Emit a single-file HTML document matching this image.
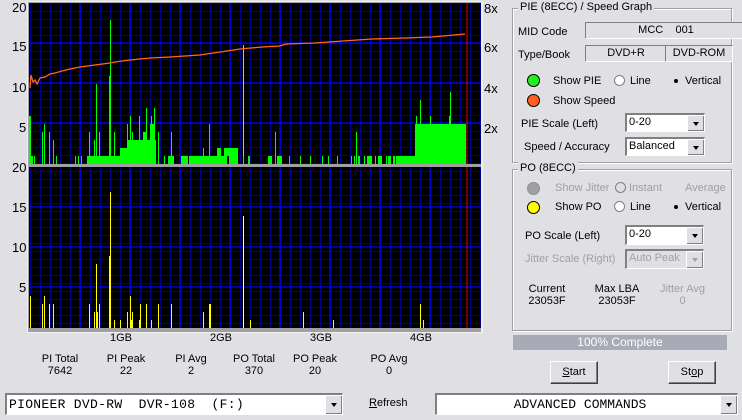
<!DOCTYPE html>
<html><head><meta charset="utf-8"><style>
body{margin:0;width:742px;height:420px;background:#e0e0e4;font-family:"Liberation Sans",sans-serif;font-size:11px;color:#000;position:relative;overflow:hidden}
.a{position:absolute;white-space:nowrap}
.n{font-size:13px}
.c{text-align:center}
.gb{position:absolute;border:1px solid #a0a0a0;box-shadow:1px 1px 0 #fff inset,1px 1px 0 #fff}
.gt{position:absolute;background:#e0e0e4;padding:0 2px}
.sunk{position:absolute;background:#e0e0e4;border-top:1px solid #808080;border-left:1px solid #808080;border-bottom:1px solid #fff;border-right:1px solid #fff}
.sel{position:absolute;background:#fff;border-top:2px solid #808080;border-left:2px solid #808080;border-bottom:1px solid #fff;border-right:1px solid #fff;box-sizing:border-box;padding-left:2px;line-height:15px}
.sel.dis{background:#e0e0e4;color:#a0a0a0}
.arr{position:absolute;right:0;top:0;bottom:0;width:16px;background:#e0e0e4;border-left:1px solid #fff;border-top:1px solid #fff;box-shadow:-1px -1px 0 #808080 inset}
.arr:after{content:"";position:absolute;left:5px;top:50%;margin-top:-2px;border-left:3px solid transparent;border-right:3px solid transparent;border-top:4px solid #000}
.dis .arr:after{border-top-color:#a0a0a0}
.btn{position:absolute;background:#e0e0e4;border:1px solid #fff;border-right-color:#404040;border-bottom-color:#404040;box-shadow:-1px -1px 0 #808080 inset;text-align:center;box-sizing:border-box}
.rad{position:absolute;width:11px;height:11px;border-radius:50%;background:#fff;box-sizing:border-box;border:1px solid #808080}
.dot{position:absolute;width:13px;height:13px;border-radius:50%;border:1px solid #000;box-sizing:border-box}
.g{color:#a0a0a0}
</style></head><body>
<svg class="a" style="left:0;top:0" width="500" height="335">
<defs>
<pattern id="p" x="30" y="3" width="10" height="8" patternUnits="userSpaceOnUse"><rect width="10" height="8" fill="#000"/><path d="M0.5 0V8M0 0.5H10" stroke="#000090" stroke-width="1" fill="none"/></pattern>
</defs>
<rect x="27" y="1" width="456" height="332" fill="#f0f0f0"/>
<rect x="28" y="2" width="453" height="330" fill="#a0a0a0"/>
<rect x="29" y="3" width="452" height="161" fill="url(#p)"/>
<rect x="29" y="167" width="452" height="161" fill="url(#p)"/>
<g stroke="#0000ff" stroke-width="1.2">
<path d="M80 3V164M130 3V164M180 3V164M230 3V164M280 3V164M330 3V164M380 3V164M430 3V164"/>
<path d="M80 167V328M130 167V328M180 167V328M230 167V328M280 167V328M330 167V328M380 167V328M430 167V328"/>
<path d="M29 43H481M29 83H481M29 123H481M29 207H481M29 247H481M29 287H481"/>
</g>
<path d="M467 3V164M467 167V328" stroke="#e00000"/>
<g fill="#00ff00">
<rect x="29" y="116" width="2" height="48"/><rect x="31" y="156" width="2" height="8"/><rect x="34" y="156" width="1" height="8"/>
<rect x="42" y="132" width="1" height="32"/><rect x="44" y="124" width="1" height="40"/><rect x="49" y="132" width="1" height="32"/><rect x="53" y="140" width="1" height="24"/><rect x="56" y="156" width="1" height="8"/>
<rect x="75" y="156" width="1" height="8"/><rect x="78" y="156" width="1" height="8"/><rect x="81" y="156" width="1" height="8"/>
<rect x="87" y="156" width="33" height="8"/><rect x="89" y="132" width="1" height="24"/><rect x="94" y="140" width="1" height="16"/><rect x="96" y="84" width="1" height="72"/><rect x="99" y="132" width="1" height="24"/>
<rect x="109" y="76" width="1" height="80"/><rect x="110" y="20" width="1" height="136"/><rect x="114" y="132" width="1" height="24"/>
<rect x="120" y="148" width="8" height="16"/><rect x="128" y="140" width="28" height="24"/><rect x="127" y="124" width="1" height="24"/><rect x="130" y="116" width="1" height="24"/><rect x="132" y="132" width="1" height="24"/>
<rect x="139" y="116" width="1" height="24"/><rect x="143" y="132" width="4" height="8"/><rect x="146" y="108" width="1" height="32"/><rect x="150" y="124" width="5" height="16"/><rect x="151" y="116" width="1" height="8"/><rect x="154" y="108" width="1" height="16"/>
<rect x="158" y="132" width="1" height="32"/><rect x="164" y="156" width="1" height="8"/><rect x="168" y="156" width="6" height="8"/><rect x="171" y="132" width="1" height="24"/>
<rect x="181" y="156" width="7" height="8"/><rect x="189" y="156" width="38" height="8"/><rect x="203" y="148" width="1" height="8"/><rect x="209" y="124" width="1" height="32"/><rect x="217" y="148" width="4" height="8"/><rect x="224" y="148" width="14" height="8"/>
<rect x="229" y="156" width="9" height="8"/><rect x="243" y="156" width="1" height="8"/><rect x="248" y="156" width="2" height="8"/>
<rect x="268" y="156" width="4" height="8"/><rect x="275" y="132" width="1" height="32"/><rect x="277" y="156" width="5" height="8"/><rect x="289" y="156" width="1" height="8"/><rect x="300" y="156" width="1" height="8"/>
<rect x="310" y="156" width="1" height="8"/><rect x="322" y="156" width="1" height="8"/><rect x="328" y="156" width="1" height="8"/><rect x="337" y="156" width="1" height="8"/><rect x="351" y="156" width="1" height="8"/><rect x="354" y="156" width="1" height="8"/><rect x="356" y="132" width="1" height="32"/><rect x="358" y="156" width="2" height="8"/><rect x="364" y="156" width="1" height="8"/><rect x="367" y="156" width="5" height="8"/><rect x="375" y="156" width="1" height="8"/><rect x="378" y="156" width="4" height="8"/><rect x="386" y="156" width="1" height="8"/><rect x="388" y="156" width="3" height="8"/><rect x="393" y="156" width="2" height="8"/><rect x="396" y="156" width="8" height="8"/><rect x="403" y="156" width="12" height="8"/>
<rect x="415" y="124" width="51" height="40"/><rect x="416" y="116" width="1" height="8"/><rect x="420" y="100" width="1" height="24"/><rect x="430" y="116" width="1" height="8"/><rect x="450" y="92" width="1" height="32"/><rect x="449" y="116" width="2" height="8"/>
</g>
<rect x="243" y="45" width="1" height="111" fill="#c0c0c0"/>
<polyline fill="none" stroke="#ff6a10" stroke-width="1.3" points="30,88 31,75 33,82 35,80 37,84 40,78 45,77 50,74 55,73 62,71 70,69 80,67 95,65 110,63 115,62 130,60 150,58 170,57 200,55 240,49 262,47 280,46 286,44 315,43 343,41 372,39 405,38 432,37 465,34"/>
<g fill="#ffff00">
<rect x="30" y="296" width="1" height="32"/><rect x="42" y="304" width="1" height="24"/><rect x="44" y="296" width="1" height="32"/><rect x="49" y="304" width="1" height="24"/><rect x="53" y="304" width="1" height="24"/>
<rect x="89" y="304" width="1" height="24"/><rect x="94" y="312" width="1" height="16"/><rect x="96" y="264" width="1" height="64"/><rect x="97" y="312" width="1" height="16"/><rect x="99" y="304" width="1" height="24"/>
<rect x="109" y="256" width="1" height="72"/><rect x="110" y="192" width="1" height="136"/><rect x="114" y="320" width="1" height="8"/><rect x="120" y="320" width="1" height="8"/>
<rect x="127" y="312" width="1" height="16"/><rect x="130" y="296" width="1" height="32"/><rect x="131" y="320" width="1" height="8"/><rect x="132" y="312" width="1" height="16"/><rect x="139" y="320" width="1" height="8"/><rect x="140" y="304" width="1" height="24"/><rect x="146" y="304" width="1" height="24"/><rect x="151" y="320" width="1" height="8"/><rect x="158" y="304" width="1" height="24"/><rect x="171" y="304" width="1" height="24"/>
<rect x="203" y="312" width="1" height="16"/><rect x="209" y="304" width="2" height="24"/><rect x="250" y="320" width="1" height="8"/>
<rect x="303" y="312" width="1" height="16"/><rect x="333" y="320" width="1" height="8"/><rect x="420" y="304" width="1" height="24"/><rect x="423" y="320" width="1" height="8"/>
</g>
<rect x="243" y="216" width="1" height="112" fill="#ffffc0"/>
</svg>
<div class="a n" style="left:12px;top:0px">20</div>
<div class="a n" style="left:12px;top:39px">15</div>
<div class="a n" style="left:12px;top:80px">10</div>
<div class="a n" style="left:19px;top:120px">5</div>
<div class="a n" style="left:12px;top:160px">20</div>
<div class="a n" style="left:12px;top:200px">15</div>
<div class="a n" style="left:12px;top:240px">10</div>
<div class="a n" style="left:19px;top:280px">5</div>
<div class="a n" style="left:484px;top:1px">8x</div>
<div class="a n" style="left:484px;top:40px">6x</div>
<div class="a n" style="left:484px;top:81px">4x</div>
<div class="a n" style="left:484px;top:121px">2x</div>
<div class="a" style="left:110px;top:332px">1GB</div>
<div class="a" style="left:210px;top:332px">2GB</div>
<div class="a" style="left:310px;top:332px">3GB</div>
<div class="a" style="left:410px;top:332px">4GB</div>
<div class="a c" style="left:30px;width:60px;top:353px">PI Total<br>7642</div>
<div class="a c" style="left:96px;width:60px;top:353px">PI Peak<br>22</div>
<div class="a c" style="left:161px;width:60px;top:353px">PI Avg<br>2</div>
<div class="a c" style="left:224px;width:60px;top:353px">PO Total<br>370</div>
<div class="a c" style="left:285px;width:60px;top:353px">PO Peak<br>20</div>
<div class="a c" style="left:359px;width:60px;top:353px">PO Avg<br>0</div>

<div class="sel" style="left:5px;top:393px;width:338px;height:22px;font-family:'Liberation Mono',monospace;font-size:13px;line-height:19px;letter-spacing:0.3px">PIONEER DVD-RW&nbsp; DVR-108&nbsp; (F:)<div class="arr"></div></div>
<div class="a" style="left:369px;top:397px"><u>R</u>efresh</div>
<div class="sel" style="left:435px;top:393px;width:303px;height:22px;font-family:'Liberation Mono',monospace;font-size:13px;line-height:19px;text-align:center;padding-right:16px">ADVANCED COMMANDS<div class="arr"></div></div>

<div class="gb" style="left:512px;top:8px;width:218px;height:153px"></div>
<div class="gt" style="left:518px;top:1px">PIE (8ECC) / Speed Graph</div>
<div class="a" style="left:518px;top:26px">MID Code</div>
<div class="sunk c" style="left:585px;top:22px;width:160px;height:15px;line-height:15px">MCC&nbsp;&nbsp;&nbsp; 001</div>
<div class="a" style="left:518px;top:49px">Type/Book</div>
<div class="sunk c" style="left:585px;top:45px;width:80px;height:15px;line-height:15px">DVD+R</div>
<div class="sunk c" style="left:665px;top:45px;width:66px;height:15px;line-height:15px">DVD-ROM</div>
<div class="dot" style="left:527px;top:74px;background:#22ee22"></div>
<div class="a" style="left:553px;top:75px">Show PIE</div>
<div class="rad" style="left:614px;top:75px"></div><div class="a" style="left:630px;top:75px">Line</div>
<div class="rad" style="left:671px;top:75px;border:none;background:transparent"><div style="position:absolute;left:3px;top:4px;width:4px;height:4px;background:#000;border-radius:50%"></div></div><div class="a" style="left:685px;top:75px">Vertical</div>
<div class="dot" style="left:527px;top:94px;background:#ff6020"></div>
<div class="a" style="left:553px;top:95px">Show Speed</div>
<div class="a" style="left:521px;top:118px">PIE Scale (Left)</div>
<div class="sel" style="left:625px;top:113px;width:80px;height:19px">0-20<div class="arr"></div></div>
<div class="a" style="left:524px;top:141px">Speed / Accuracy</div>
<div class="sel" style="left:625px;top:137px;width:80px;height:19px">Balanced<div class="arr"></div></div>

<div class="gb" style="left:512px;top:169px;width:218px;height:160px"></div>
<div class="gt" style="left:518px;top:162px">PO (8ECC)</div>
<div class="dot" style="left:527px;top:182px;background:#a0a0a0;border-color:#909090"></div>
<div class="a g" style="left:555px;top:182px">Show Jitter</div>
<div class="rad" style="left:615px;top:182px;background:#e0e0e4"></div><div class="a g" style="left:629px;top:182px">Instant</div>
<div class="a g" style="left:685px;top:182px">Average</div>
<div class="dot" style="left:527px;top:201px;background:#ffff00"></div>
<div class="a" style="left:555px;top:201px">Show PO</div>
<div class="rad" style="left:614px;top:201px"></div><div class="a" style="left:630px;top:201px">Line</div>
<div class="rad" style="left:671px;top:201px;border:none;background:transparent"><div style="position:absolute;left:3px;top:4px;width:4px;height:4px;background:#000;border-radius:50%"></div></div><div class="a" style="left:685px;top:201px">Vertical</div>
<div class="a" style="left:525px;top:230px">PO Scale (Left)</div>
<div class="sel" style="left:625px;top:225px;width:79px;height:20px">0-20<div class="arr"></div></div>
<div class="a g" style="left:525px;top:253px">Jitter Scale (Right)</div>
<div class="sel dis" style="left:625px;top:249px;width:79px;height:20px">Auto Peak<div class="arr"></div></div>
<div class="a c" style="left:527px;width:40px;top:283px">Current<br>23053F</div>
<div class="a c" style="left:592px;width:50px;top:283px">Max LBA<br>23053F</div>
<div class="a c g" style="left:655px;width:55px;top:283px">Jitter Avg<br>0</div>

<div class="a c" style="left:513px;top:335px;width:214px;height:15px;line-height:15px;background:#a8aab8;color:#fff;font-size:12px">100% Complete</div>
<div class="btn" style="left:550px;top:361px;width:48px;height:23px;line-height:21px"><u>S</u>tart</div>
<div class="btn" style="left:668px;top:361px;width:48px;height:23px;line-height:21px">St<u>o</u>p</div>
</body></html>
